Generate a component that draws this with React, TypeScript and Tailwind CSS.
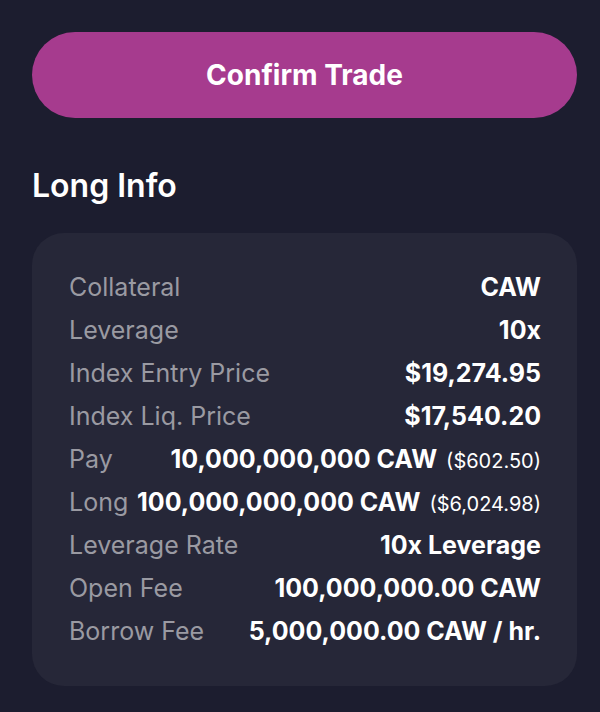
import React from "react";

type Row = {
  label: string;
  value: string;
  usd?: string;
};

const rows: Row[] = [
  { label: "Collateral", value: "CAW" },
  { label: "Leverage", value: "10x" },
  { label: "Index Entry Price", value: "$19,274.95" },
  { label: "Index Liq. Price", value: "$17,540.20" },
  { label: "Pay", value: "10,000,000,000 CAW", usd: "($602.50)" },
  { label: "Long", value: "100,000,000,000 CAW", usd: "($6,024.98)" },
  { label: "Leverage Rate", value: "10x Leverage" },
  { label: "Open Fee", value: "100,000,000.00 CAW" },
  { label: "Borrow Fee", value: "5,000,000.00 CAW / hr." },
];

export default function App() {
  return (
    <div
      className="w-[600px] h-[712px] bg-[#1c1d2f] pl-8 pr-[23px] pt-8 overflow-hidden"
      style={{ fontFamily: "Inter, 'Liberation Sans', sans-serif" }}
    >
      <button className="w-full h-[86px] rounded-full bg-[#a63b8e] text-white text-[28px] font-bold">
        Confirm Trade
      </button>

      <h2 className="mt-[50px] text-white text-[32px] font-semibold leading-[36px]">
        Long Info
      </h2>

      <div className="mt-[29px] rounded-[32px] bg-[#262738] pl-[37px] pr-[36px] py-[33px]">
        {rows.map((row) => (
          <div
            key={row.label}
            className="flex items-center justify-between gap-2 h-[43px] text-[25px] leading-none"
          >
            <span className="text-[#9a9aa2] whitespace-nowrap">{row.label}</span>
            <span className="flex items-baseline gap-[9px] whitespace-nowrap">
              <span className="text-white font-bold">{row.value}</span>
              {row.usd && <span className="text-white text-[20px]">{row.usd}</span>}
            </span>
          </div>
        ))}
      </div>
    </div>
  );
}
